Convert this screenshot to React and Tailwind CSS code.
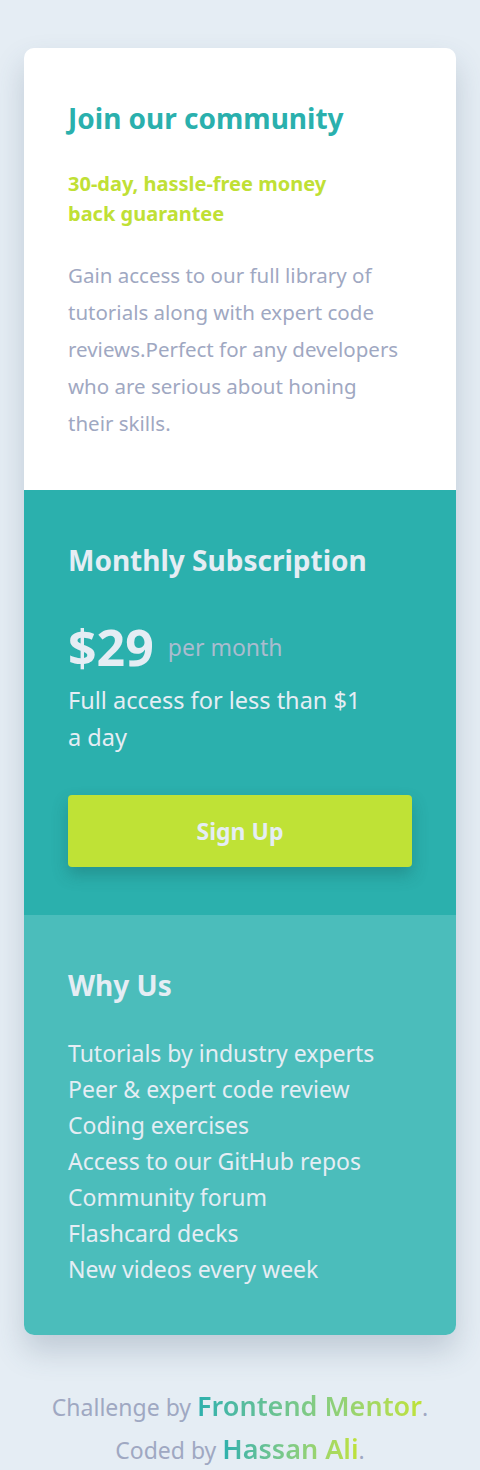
const features = [
  "Tutorials by industry experts",
  "Peer & expert code review",
  "Coding exercises",
  "Access to our GitHub repos",
  "Community forum",
  "Flashcard decks",
  "New videos every week",
];

const App = () => {
  return (
    <div
      className="min-h-screen bg-[#e5edf4] px-6 pt-12 pb-4"
      style={{ fontFamily: '"Noto Sans", sans-serif' }}
    >
      <main className="rounded-[10px] overflow-hidden shadow-[0_16px_30px_rgba(60,80,110,0.22)]">
        {/* Intro */}
        <section className="bg-white px-11 pt-[54px] pb-12">
          <h1 className="text-[28px] leading-[32px] font-bold text-[#2ab0ad]">
            Join our community
          </h1>
          <p className="mt-[35px] text-[20px] leading-[30px] font-bold text-[#c0e035] pr-16">
            30-day, hassle-free money back guarantee
          </p>
          <p className="mt-[28px] text-[20.5px] leading-[37px] text-[#9fa8c2] pr-2">
            Gain access to our full library of tutorials along with expert code
            reviews.Perfect for any developers who are serious about honing
            their skills.
          </p>
        </section>

        {/* Subscription */}
        <section className="bg-[#2bb0ad] px-11 pt-[54px] pb-12">
          <h2 className="text-[28px] leading-[32px] font-bold text-[#e5edf4]">
            Monthly Subscription
          </h2>
          <div className="mt-[45px] flex items-center gap-[14px] h-[52px]">
            <span className="text-[50px] leading-none font-bold text-[#e5edf4]">$29</span>
            <span className="text-[23px] text-[#aabccf]">per month</span>
          </div>
          <p className="mt-[9px] text-[23.5px] leading-[37px] text-[#e5edf4] pr-10">
            Full access for less than $1 a day
          </p>
          <button className="mt-[39px] w-full h-[72px] rounded bg-[#bfe236] text-[23px] font-bold text-[#e5edf4] shadow-[0_8px_16px_rgba(20,80,80,0.3)]">
            Sign Up
          </button>
        </section>

        {/* Why us */}
        <section className="bg-[#4bbdbb] px-11 pt-[54px] pb-12">
          <h2 className="text-[28px] leading-[32px] font-bold text-[#e5edf4]">Why Us</h2>
          <ul className="mt-[34px] text-[23px] leading-[36px] text-[#e5edf4]">
            {features.map((f) => (
              <li key={f}>{f}</li>
            ))}
          </ul>
        </section>
      </main>

      <footer className="mt-[50px] text-center text-[23px] leading-[42px] text-[#9fa8c2]">
        <p>
          Challenge by{" "}
          <span className="text-[27px] font-semibold bg-gradient-to-r from-[#2bb0ad] to-[#bfe236] bg-clip-text text-transparent">
            Frontend Mentor
          </span>
          .
        </p>
        <p>
          Coded by{" "}
          <span className="text-[27px] font-semibold bg-gradient-to-r from-[#2bb0ad] to-[#bfe236] bg-clip-text text-transparent">
            Hassan Ali
          </span>
          .
        </p>
      </footer>
    </div>
  );
};

export default App;
